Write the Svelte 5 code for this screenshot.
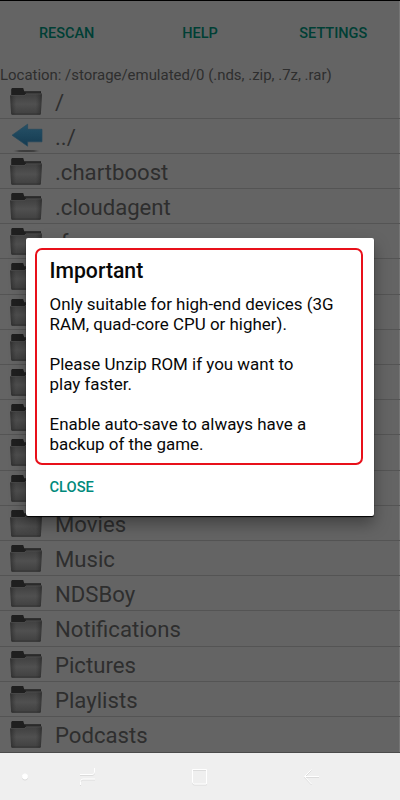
<script>
  const rows = ['/', '../', '.chartboost', '.cloudagent', '.f', '', '', '', '', '', '', '', 'Movies', 'Music', 'NDSBoy', 'Notifications', 'Pictures', 'Playlists', 'Podcasts'];
</script>

<div class="screen">
  <header>
    <span>RESCAN</span><span>HELP</span><span>SETTINGS</span>
  </header>
  <div class="location"><span>Location: /storage/emulated/0 (.nds, .zip, .7z, .rar)</span></div>
  <svg class="defs" width="0" height="0">
    <defs>
      <linearGradient id="front" x1="0" y1="0" x2="0" y2="1">
        <stop offset="0" stop-color="#3f3f3f" /><stop offset=".5" stop-color="#505050" /><stop offset="1" stop-color="#404040" />
      </linearGradient>
      <linearGradient id="sides" x1="0" y1="0" x2="1" y2="0">
        <stop offset="0" stop-color="#202020" stop-opacity=".6" /><stop offset=".2" stop-color="#303030" stop-opacity="0" />
        <stop offset=".8" stop-color="#303030" stop-opacity="0" /><stop offset="1" stop-color="#202020" stop-opacity=".6" />
      </linearGradient>
      <linearGradient id="blue" x1="0" y1="0" x2="0" y2="1">
        <stop offset="0" stop-color="#275167" /><stop offset=".5" stop-color="#1d465c" /><stop offset="1" stop-color="#153a50" />
      </linearGradient>
      <radialGradient id="shade">
        <stop offset="0" stop-color="#333" /><stop offset=".6" stop-color="#414141" /><stop offset="1" stop-color="#646464" stop-opacity="0" />
      </radialGradient>
    </defs>
  </svg>
  <ul>
    {#each rows as name}
      <li>
        {#if name === '../'}
          <svg class="icon" width="34" height="35" viewBox="0 0 34 35">
            <path d="M3 16.2 18.6 5.2V10.3H33V22.8H18.6V27.2Z" fill="url(#blue)" stroke="#25495b" stroke-width=".7" />
            <ellipse cx="17.5" cy="32" rx="16" ry="1.3" fill="url(#shade)" />
          </svg>
        {:else}
          <svg class="icon" width="34" height="35" viewBox="0 0 34 35">
            <path d="M2.2 29V5.2L3 4H14.2L15.2 7.3H32V13L31 29Z" fill="#1f1f1f" />
            <path d="M16.5 8.2H31.4" stroke="#343434" stroke-width=".8" />
            <path d="M1.1 11.3H15.2L17.2 9.5H33L31.9 29.5Q31.9 30.5 30.8 30.5H3.2Q2.2 30.5 2.1 29.5Z" fill="url(#front)" />
            <path d="M1.1 11.3H15.2L17.2 9.5H33L31.9 29.5Q31.9 30.5 30.8 30.5H3.2Q2.2 30.5 2.1 29.5Z" fill="url(#sides)" />
            <path d="M1.6 11.6H15.4L17.3 9.9H32.7" fill="none" stroke="#555" stroke-width=".6" />
            <path d="M2.7 30.2H31.4" stroke="#292929" stroke-width=".8" />
          </svg>
        {/if}
        <span>{name}</span>
      </li>
    {/each}
  </ul>
  <nav>
    <svg width="400" height="47" viewBox="0 0 400 47">
      <g fill="none" stroke="#dcdcdc" stroke-width="1" transform="translate(0 1)">
        <circle cx="25" cy="23.5" r="2.6" fill="#dcdcdc" />
        <path d="M80 21.5H92Q94.5 21.5 94.5 19V15M95 26H83Q80.5 26 80.5 28.5V32" />
        <path d="M192.5 16.5H206.5V31H194.5Q192.5 31 192.5 29Z" />
        <path d="M319 23.5H304.5L311.5 16.5M304.5 23.5 311.5 31" />
      </g>
      <g fill="none" stroke="#fff" stroke-width="1">
        <circle cx="25" cy="23.5" r="2.6" fill="#fff" />
        <path d="M80 21.5H92Q94.5 21.5 94.5 19V15M95 26H83Q80.5 26 80.5 28.5V32" />
        <path d="M192.5 16.5H206.5V31H194.5Q192.5 31 192.5 29Z" />
        <path d="M319 23.5H304.5L311.5 16.5M304.5 23.5 311.5 31" />
      </g>
    </svg>
  </nav>
  <section class="dialog">
    <div class="notice">
      <h1><span>Important</span></h1>
      <p>Only suitable for high-end devices (3G<br />RAM, quad-core CPU or higher).</p>
      <p>Please Unzip ROM if you want to<br />play faster.</p>
      <p>Enable auto-save to always have a<br />backup of the game.</p>
    </div>
    <button>CLOSE</button>
  </section>
</div>

<style>
  :global(body) { margin: 0; }
  .screen {
    position: relative;
    box-sizing: border-box;
    width: 400px;
    height: 800px;
    overflow: hidden;
    display: flex;
    flex-direction: column;
    background: linear-gradient(90deg, #646464 399px, #757575 399px);
    border-top: 1px solid #000;
    font-family: Roboto, sans-serif;
    color: #2e2e2e;
  }
  header {
    height: 65px;
    flex: none;
    display: grid;
    grid-template-columns: repeat(3, 133.3px);
    text-align: center;
    line-height: 66px;
    font-size: 14.5px;
    font-weight: 500;
    color: #003f35;
  }
  .location {
    height: 17.5px;
    flex: none;
    line-height: 18px;
    font-size: 14.95px;
    white-space: nowrap;
  }
  .defs { position: absolute; }
  ul {
    list-style: none;
    margin: 0;
    padding: 0;
    height: 669.5px;
    flex: none;
    overflow: hidden;
  }
  li {
    box-sizing: border-box;
    height: 35.2px;
    display: flex;
    align-items: flex-start;
    padding-left: 9px;
    border-bottom: 1px solid #545454;
    font-size: 22.15px;
    line-height: 37.5px;
  }
  li:last-child { border-color: transparent; }
  .icon { flex: none; margin-right: 12px; }
  nav { height: 47px; flex: none; background: #efefef; box-shadow: 0 -1px #4b4b4b; }
  nav svg { display: block; }
  .dialog {
    position: absolute;
    left: 26px;
    top: 237px;
    box-sizing: border-box;
    width: 348px;
    height: 278px;
    padding: 10px 11px 0 9px;
    border-radius: 2px;
    background: #fff;
    box-shadow: 0 1px 1px #000, 0 8px 16px rgba(0, 0, 0, .35);
    color: #080808;
  }
  .notice {
    box-sizing: border-box;
    height: 217px;
    padding: 6.5px 0 0 12.5px;
    border: 2px solid #e8101a;
    border-radius: 7px;
  }
  h1 { margin: 0 0 9px; font-size: 21.2px; font-weight: 500; line-height: 28px; }
  p { margin: 0 0 20px; font-size: 16.95px; line-height: 20px; white-space: nowrap; }
  button {
    display: block;
    margin: 11.5px 0 0 14.5px;
    padding: 0;
    border: 0;
    background: none;
    font: 500 14.7px/20px Roboto, sans-serif;
    color: #00897b;
  }
</style>
